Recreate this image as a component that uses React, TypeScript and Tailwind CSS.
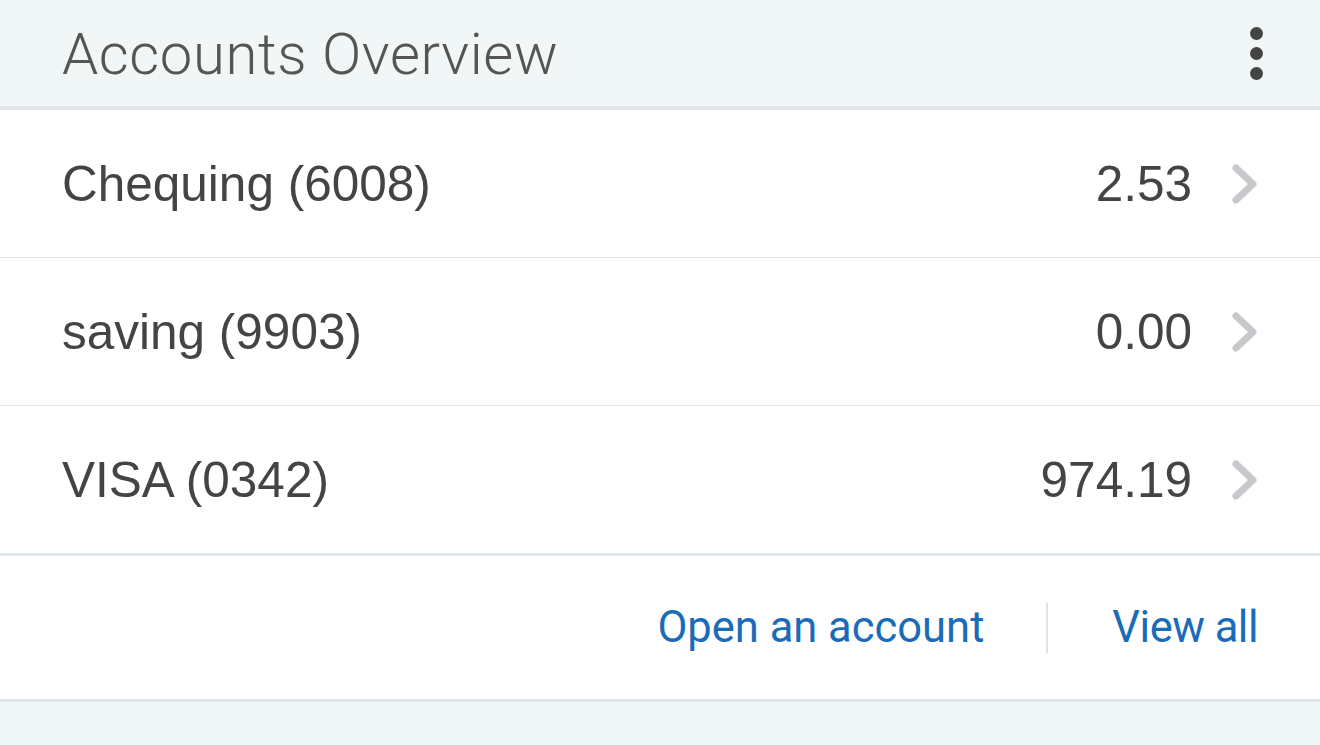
const accounts = [
  { name: "Chequing (6008)", amount: "2.53" },
  { name: "saving (9903)", amount: "0.00" },
  { name: "VISA (0342)", amount: "974.19" },
];

function Chevron() {
  return (
    <svg width="28" height="42" viewBox="0 0 28 42" className="shrink-0">
      <polyline
        points="5,5 22,21 5,37"
        fill="none"
        stroke="#c7c7cc"
        strokeWidth="7"
        strokeLinecap="round"
        strokeLinejoin="round"
      />
    </svg>
  );
}

export default function App() {
  return (
    <div className="flex flex-col w-[1320px] h-[745px] bg-[#f1f6f7] font-['Liberation_Sans',Arial,sans-serif] overflow-hidden">
      {/* Header */}
      <header className="flex items-center justify-between h-[110px] shrink-0 pl-[62px] pr-[57px] bg-[#f1f6f7] border-b-[4px] border-[#dfe7ea]">
        <h1 className="text-[58px] font-light text-[#555555] font-['Roboto',sans-serif] tracking-[0.6px] leading-none mt-[2px]">
          Accounts Overview
        </h1>
        <div className="flex flex-col gap-[7px]">
          <span className="w-[13px] h-[13px] rounded-full bg-[#444444]" />
          <span className="w-[13px] h-[13px] rounded-full bg-[#444444]" />
          <span className="w-[13px] h-[13px] rounded-full bg-[#444444]" />
        </div>
      </header>

      {/* Account rows */}
      <div className="flex flex-col bg-white shrink-0">
        {accounts.map((a, i) => (
          <div
            key={a.name}
            className={`flex items-center justify-between pl-[62px] pr-[61px] ${
              i < accounts.length - 1 ? "h-[148px] border-b border-[#e6e6e6]" : "h-[147px]"
            }`}
          >
            <span className="text-[49.5px] text-[#444444] leading-none">{a.name}</span>
            <div className="flex items-center gap-[39px]">
              <span className="text-[49.5px] text-[#444444] leading-none">{a.amount}</span>
              <Chevron />
            </div>
          </div>
        ))}
      </div>

      {/* Footer links */}
      <div className="flex items-center justify-end h-[149px] shrink-0 pr-[62px] bg-white border-t-[3px] border-b-[3px] border-[#dfe7ea]">
        <span className="text-[43.5px] text-[#1a6bb8] font-['Roboto',sans-serif] leading-none">Open an account</span>
        <span className="w-[2px] h-[50px] bg-[#e2e2e2] ml-[62px] mr-[64px]" />
        <span className="text-[43.5px] text-[#1a6bb8] font-['Roboto',sans-serif] tracking-[-0.5px] leading-none">View all</span>
      </div>

      <div className="flex-1 bg-[#f1f6f7]" />
    </div>
  );
}
